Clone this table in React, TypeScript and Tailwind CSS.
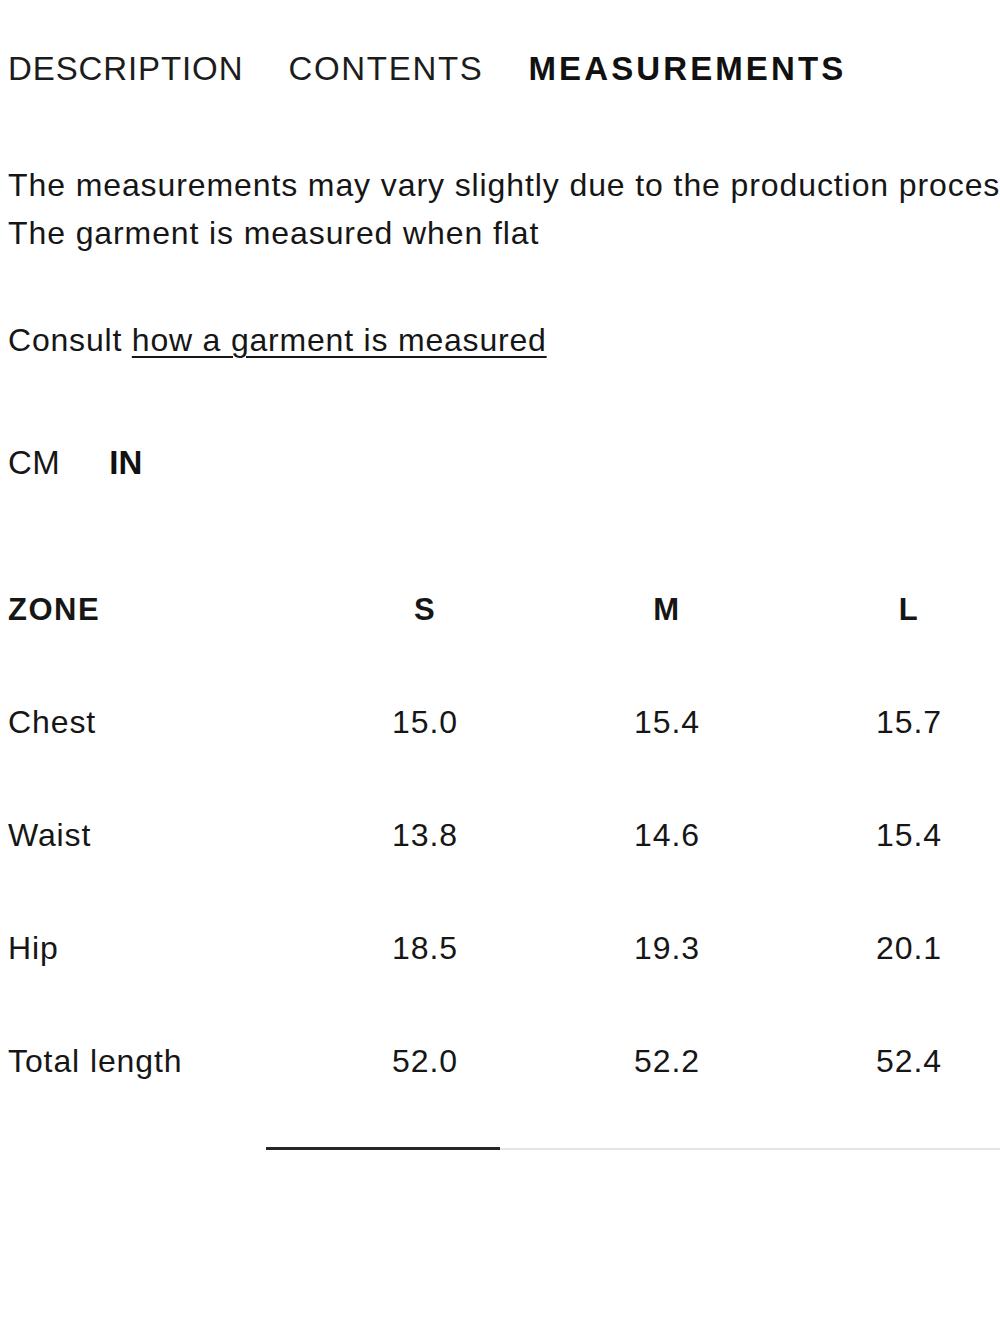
import { useState } from 'react';

const tabs = [
  { label: 'DESCRIPTION', tracking: 'tracking-[0.9px]' },
  { label: 'CONTENTS', tracking: 'tracking-[1.7px]' },
  { label: 'MEASUREMENTS', tracking: 'tracking-[3.1px]' },
];

const sizes = ['S', 'M', 'L'];

const rows = [
  { zone: 'Chest', values: ['15.0', '15.4', '15.7'] },
  { zone: 'Waist', values: ['13.8', '14.6', '15.4'] },
  { zone: 'Hip', values: ['18.5', '19.3', '20.1'] },
  { zone: 'Total length', values: ['52.0', '52.2', '52.4'] },
];

export default function App() {
  const [activeTab, setActiveTab] = useState('MEASUREMENTS');
  const [unit, setUnit] = useState<'CM' | 'IN'>('IN');

  return (
    <div
      className="w-[1000px] h-[1333px] overflow-hidden bg-white pl-2 text-[#161616]"
      style={{ fontFamily: '"Liberation Sans", Arial, sans-serif' }}
    >
      {/* tabs */}
      <div className="flex gap-[45px] pt-[50px] text-[33px] leading-[38px] whitespace-nowrap">
        {tabs.map((tab) => (
          <button
            key={tab.label}
            onClick={() => setActiveTab(tab.label)}
            className={
              tab.label === activeTab
                ? `font-bold text-[#111] ${tab.tracking}`
                : `text-[#1c1c1c] ${tab.tracking}`
            }
          >
            {tab.label}
          </button>
        ))}
      </div>

      {/* intro, first line runs past the edge like the original */}
      <div className="mt-[73px] text-[32px] leading-[48px] tracking-[0.9px] whitespace-nowrap">
        <p>The measurements may vary slightly due to the production process.</p>
        <p>The garment is measured when flat</p>
      </div>

      <p className="mt-[59px] text-[32px] leading-[48px] tracking-[0.8px] whitespace-nowrap">
        Consult{' '}
        <a href="#" className="underline underline-offset-[5px] decoration-[2px]">
          how a garment is measured
        </a>
      </p>

      {/* unit switch */}
      <div className="mt-[75px] flex gap-[49px] text-[33px] leading-[48px]">
        {(['CM', 'IN'] as const).map((u) => (
          <button
            key={u}
            onClick={() => setUnit(u)}
            className={u === unit ? 'font-bold text-[#111]' : 'tracking-[0.5px]'}
          >
            {u}
          </button>
        ))}
      </div>

      {/* size table */}
      <div className="mt-[68px] w-[1022px]">
        <div className="grid grid-cols-[296px_242px_242px_242px] h-[110px] items-center text-[31px] font-bold tracking-[1.5px]">
          <div>ZONE</div>
          {sizes.map((s) => (
            <div key={s} className="text-center">
              {s}
            </div>
          ))}
        </div>
        {rows.map((row) => (
          <div
            key={row.zone}
            className="grid grid-cols-[296px_242px_242px_242px] h-[113px] items-center text-[32px] tracking-[0.9px]"
          >
            <div>{row.zone}</div>
            {row.values.map((v, i) => (
              <div key={i} className="text-center">
                {v}
              </div>
            ))}
          </div>
        ))}
      </div>

      {/* scroll indicator */}
      <div className="mt-[30px] ml-[258px] flex items-center">
        <div className="h-[3px] w-[234px] bg-[#262626]" />
        <div className="h-[2px] flex-1 bg-[#e4e4e4]" />
      </div>
    </div>
  );
}
